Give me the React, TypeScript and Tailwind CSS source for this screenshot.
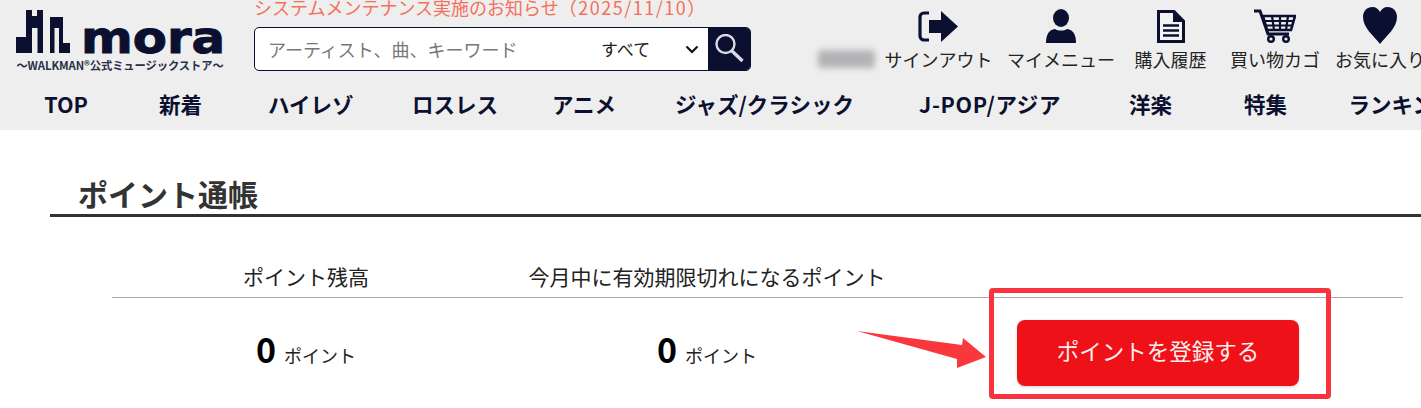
import React from "react";

const navy = "#0b1030";

const navItems = [
  { label: "TOP", className: "ml-[44px] w-[44px]" },
  { label: "新着", className: "ml-[71px] w-[42px]" },
  { label: "ハイレゾ", className: "ml-[67px] w-[83px]" },
  { label: "ロスレス", className: "ml-[61px] w-[84px]" },
  { label: "アニメ", className: "ml-[56px] w-[62px]" },
  { label: "ジャズ/クラシック", className: "ml-[60px] w-[181px]" },
  { label: "J-POP/アジア", className: "ml-[64px] w-[142px] tracking-[0.7px]" },
  { label: "洋楽", className: "ml-[68px] w-[41px]" },
  { label: "特集", className: "ml-[74px] w-[41px]" },
  { label: "ランキング", className: "ml-[63px] w-[108px]" },
];

const Logo = () => (
  <div className="flex w-[210px] shrink-0 flex-col">
    <svg width="210" height="45" viewBox="0 0 210 45" className="block overflow-visible">
      <path
        fill={navy}
        d="M1 43V27H11V0H17V6H22V0H28V43H22.500V18H17V43ZM35 43V7H48V33H55V43H44V18H39.500V43Z"
      />
      <text
        x="66"
        y="43"
        fill={navy}
        stroke={navy}
        strokeWidth="1"
        fontFamily="'DejaVu Sans', sans-serif"
        fontWeight="700"
        fontSize="44"
        textLength="144"
        lengthAdjust="spacingAndGlyphs"
      >
        mora
      </text>
    </svg>
    <span className="mt-[3px] whitespace-nowrap text-center text-[11.3px] leading-[14px] font-bold tracking-[-0.1px] text-[#2a3048]">
      〜WALKMAN®公式ミュージックストア〜
    </span>
  </div>
);

const SearchBar = () => (
  <div className="mt-[12px] flex h-[44px] w-[497px] overflow-hidden rounded-[5px] border border-[#0b1030] bg-white">
    <span className="ml-[13px] w-[333px] self-center text-[18px] leading-[24px] whitespace-nowrap text-[#777]">
      アーティスト、曲、キーワード
    </span>
    <span className="w-[66px] self-center text-[17px] leading-[24px] text-[#222]">すべて</span>
    <span className="flex w-[41px] items-center justify-center pl-[9px]">
      <svg width="14" height="9" viewBox="0 0 14 9" fill="none" stroke="#111" strokeWidth="2.2">
        <path d="M1.5 1.5 7 7l5.5-5.5" />
      </svg>
    </span>
    <span className="flex flex-1 items-center justify-center bg-[#0b1030]">
      <svg width="30" height="30" viewBox="0 0 30 30" fill="none" stroke="#d8dbe4">
        <circle cx="11.500" cy="10" r="9" strokeWidth="2.4" />
        <path d="M18 17 28.500 27" strokeWidth="3.4" />
      </svg>
    </span>
  </div>
);

const SignOutIcon = () => (
  <svg width="41" height="33" viewBox="0 0 41 33" fill={navy}>
    <path d="M11 3H6a4 4 0 0 0-4 4v19a4 4 0 0 0 4 4h5" fill="none" stroke={navy} strokeWidth="3.2" />
    <path d="M11 10h12V1l17 15.500L23 32v-9H11Z" />
  </svg>
);

const UserIcon = () => (
  <svg width="30" height="34" viewBox="0 0 30 34" fill={navy}>
    <ellipse cx="15" cy="9" rx="8" ry="9" />
    <path d="M0 34c0-9 3-13 9-14 3 2 9 2 12 0 6 1 9 5 9 14Z" />
  </svg>
);

const DocIcon = () => (
  <svg width="28" height="33" viewBox="0 0 28 33">
    <path d="M1.500 1.500H17L26.500 11V31.500H1.500Z" fill="#f4f4f4" stroke={navy} strokeWidth="3" />
    <path d="M16 1.500V12H26.500Z" fill={navy} />
    <path d="M6 15.500H22M6 20.500H22M6 25.500H22" stroke={navy} strokeWidth="2.4" />
  </svg>
);

const CartIcon = () => (
  <svg width="42" height="34" viewBox="0 0 42 34" fill="none" stroke={navy}>
    <path d="M0 2H6L14 25H35" strokeWidth="3" />
    <path d="M9 7H41L37 21H13Z" strokeWidth="2.6" />
    <path d="M9 12H39M10 16.500H38M18 7 20 21M26 7V21M34 7 32 21" strokeWidth="2.2" />
    <circle cx="17" cy="30" r="2.800" strokeWidth="2.4" />
    <circle cx="32" cy="30" r="2.800" strokeWidth="2.4" />
  </svg>
);

const HeartIcon = () => (
  <svg width="34" height="38" viewBox="0 0 34 38" fill={navy}>
    <path d="M17 37C11 29 0 21 0 10 0 4 4 0 9.500 0 13 0 15.500 2 17 5 18.500 2 21 0 24.500 0 30 0 34 4 34 10 34 21 23 29 17 37Z" />
  </svg>
);

const headerLinks = [
  { label: "サインアウト", icon: <SignOutIcon />, className: "w-[109px] ml-[9px]" },
  { label: "マイメニュー", icon: <UserIcon />, className: "w-[108px] ml-[14px]" },
  { label: "購入履歴", icon: <DocIcon />, className: "w-[73px] ml-[19px]" },
  { label: "買い物カゴ", icon: <CartIcon />, className: "w-[90px] ml-[23px]" },
  { label: "お気に入り", icon: <HeartIcon />, className: "w-[90px] ml-[15px]" },
];

const App = () => {
  return (
    <div className="relative h-[408px] w-[1421px] overflow-hidden bg-white font-['Noto_Sans_CJK_JP','Liberation_Sans',sans-serif] text-[#222]">
      <header className="h-[130px] bg-[#eeeeee]">
        <div className="flex h-[85px]">
          <div className="ml-[15px] pt-[10px]">
            <Logo />
          </div>
          <div className="ml-[29px] w-[497px] shrink-0">
            <p className="h-[15px] whitespace-nowrap text-[18px] leading-[15px] text-[#f4705c]">
              システムメンテナンス実施のお知らせ<span className="tracking-[1.5px]">（2025/11/10）</span>
            </p>
            <SearchBar />
          </div>
          <div className="ml-[67px] mt-[50px] h-[18px] w-[57px] shrink-0 rounded-sm bg-[#b3b3b6] blur-[3px]" />
          <div className="flex shrink-0">
            {headerLinks.map((link) => (
              <div key={link.label} className={`${link.className} flex shrink-0 flex-col items-center`}>
                <div className="mt-[7px] flex h-[38px] items-center justify-center">{link.icon}</div>
                <span className="mt-[1px] whitespace-nowrap text-[18px] leading-[26px] text-[#222]">
                  {link.label}
                </span>
              </div>
            ))}
          </div>
        </div>
        <nav className="flex h-[45px] items-start">
          {navItems.map((item) => (
            <a
              key={item.label}
              className={`${item.className} shrink-0 whitespace-nowrap text-center text-[21.5px] leading-[37px] font-bold text-[#0b1030]`}
            >
              {item.label}
            </a>
          ))}
        </nav>
      </header>

      <main>
        <h1 className="ml-[50px] mt-[45px] h-[42px] border-b-[3px] border-[#333] pl-[28px] text-[30px] leading-[37px] font-bold text-[#333]">
          ポイント通帳
        </h1>
        <div className="ml-[112px] w-[1291px]">
          <div className="grid h-[81px] grid-cols-[388px_414px_489px] border-b border-[#aaaaaa] pt-[43px] text-center text-[21px] leading-[32px] text-[#222]">
            <span>ポイント残高</span>
            <span>今月中に有効期限切れになるポイント</span>
            <span />
          </div>
          <div className="grid grid-cols-[388px_414px_489px] items-start text-center">
            {[0, 1].map((col) => (
              <div key={col} className="mt-[26px] flex items-baseline justify-center gap-[8px] text-black">
                <span className="text-[34px] leading-[50px] font-bold">0</span>
                <span className="text-[18px] leading-[50px] text-[#222]">ポイント</span>
              </div>
            ))}
            <div className="mt-[22px] flex justify-start pl-[103px]">
              <button className="h-[66px] w-[282px] rounded-[8px] bg-[#ee1117] pb-[6px] text-[22.5px] leading-[34px] text-[#fbeeee] shadow-[0_1px_3px_rgba(60,60,100,0.25)]">
                ポイントを登録する
              </button>
            </div>
          </div>
        </div>
      </main>

      {/* annotation drawn over the page */}
      <div className="absolute left-[989px] top-[288px] h-[111px] w-[342px] rounded-[4px] border-[5px] border-[#f8333f]" />
      <svg className="absolute left-[850px] top-[325px]" width="140" height="50" viewBox="0 0 140 50">
        <path d="M7 6 112 20 113 13 136 32 107 43 107 34Z" fill="#f8383c" />
      </svg>
    </div>
  );
};

export default App;
